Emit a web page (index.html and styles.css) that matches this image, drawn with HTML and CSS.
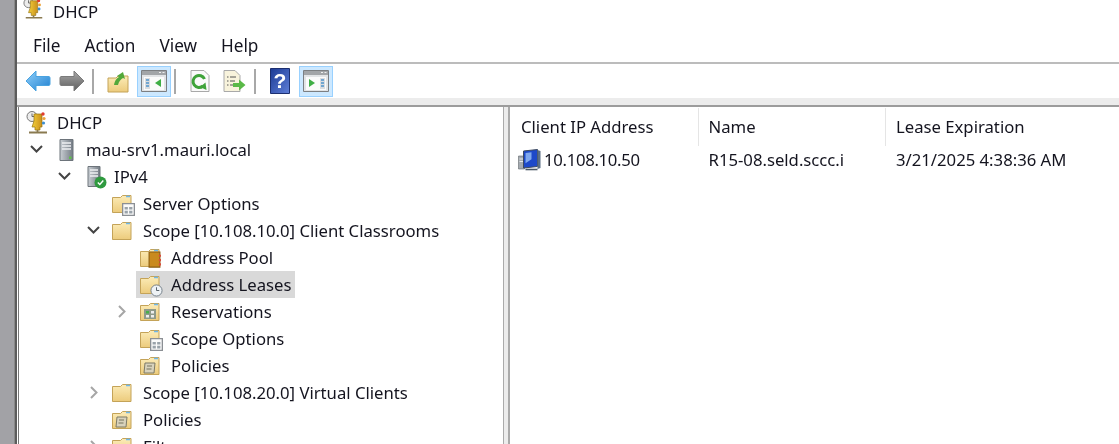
FILE: index.html
```html
<!DOCTYPE html>
<html lang="en">
<head>
  <meta charset="UTF-8">
  <title>DHCP</title>
  <link rel="stylesheet" href="styles.css">
</head>
<body>
  <svg class="defs" width="0" height="0">
    <defs>
      <linearGradient id="gFolder" x1="0" y1="0" x2="0" y2="1">
        <stop offset="0" stop-color="#fcecb8"/>
        <stop offset="1" stop-color="#eccb7c"/>
      </linearGradient>
      <linearGradient id="gBlue" x1="0" y1="0" x2="1" y2="1">
        <stop offset="0" stop-color="#8fd0fa"/>
        <stop offset="1" stop-color="#1f7fd0"/>
      </linearGradient>
      <linearGradient id="gGray" x1="0" y1="0" x2="0" y2="1">
        <stop offset="0" stop-color="#a8a8a8"/>
        <stop offset="1" stop-color="#5d5d5d"/>
      </linearGradient>
      <linearGradient id="gServer" x1="0" y1="0" x2="1" y2="0">
        <stop offset="0" stop-color="#c9ced3"/>
        <stop offset="1" stop-color="#737b84"/>
      </linearGradient>
      <linearGradient id="gHelp" x1="0" y1="0" x2="1" y2="1">
        <stop offset="0" stop-color="#1c3a94"/>
        <stop offset="1" stop-color="#5f7fd8"/>
      </linearGradient>
      <linearGradient id="gGold" x1="0" y1="0" x2="1" y2="0">
        <stop offset="0" stop-color="#f3cf3a"/>
        <stop offset="1" stop-color="#c98f1c"/>
      </linearGradient>
      <symbol id="folder" viewBox="0 0 22 22">
        <path d="M1.500 4.500h8l2-2h8.500v17h-18.500z" fill="url(#gFolder)" stroke="#c4a358"/>
        <path d="M15 3.500h4" stroke="#6fb7e8" stroke-width="1.500"/>
      </symbol>
      <symbol id="dhcp" viewBox="0 0 24 24">
        <circle cx="6" cy="5.500" r="5" fill="#ececec" stroke="#777"/>
        <path d="M6 2.500v3h3" fill="none" stroke="#666"/>
        <path d="M8 3h8v13h-2v3h-5v-3h-3l2-6z" fill="url(#gGold)" stroke="#96740f" stroke-width=".7"/>
        <circle cx="17" cy="3" r="1.700" fill="#e23c30"/>
        <circle cx="18" cy="7.500" r="1.600" fill="#eda33a"/>
        <circle cx="17.500" cy="12" r="1.600" fill="#3c8ed0"/>
        <path d="M11.500 19v2M3 21.500h18" stroke="#8a7a50" stroke-width="1.800"/>
      </symbol>
      <symbol id="server" viewBox="0 0 16 24">
        <path d="M1 1.500h13v21h-13z" fill="url(#gServer)" stroke="#6d747b"/>
        <path d="M3 5h9M3 8h9M3 11h9" stroke="#eef0f2" stroke-width="1.300"/>
        <rect x="10" y="18.500" width="2.500" height="2.500" fill="#5fc04a"/>
      </symbol>
      <symbol id="ipv4" viewBox="0 0 20 24">
        <path d="M1 1.500h12v20h-12z" fill="url(#gServer)" stroke="#6d747b"/>
        <path d="M3 5h8M3 8h8M3 11h8" stroke="#eef0f2" stroke-width="1.300"/>
        <circle cx="13.500" cy="17.500" r="6" fill="#2f9a3f"/>
        <path d="M10.800 17.500l2 2 3.500-4" fill="none" stroke="#fff" stroke-width="1.400"/>
      </symbol>
      <symbol id="grid" viewBox="0 0 10 10">
        <path d="M.5 .5h9v9h-9z" fill="#fafafa" stroke="#8b8f94"/>
        <path d="M2 3h2.500v2h-2.500zM5.500 3h2.500v2h-2.500zM2 6h2.500v2h-2.500zM5.500 6h2.500v2h-2.500z" fill="#9aa3aa"/>
      </symbol>
      <symbol id="doc" viewBox="0 0 22 24">
        <path d="M2 1.500h13l5 5v16h-18z" fill="#fafafa" stroke="#a9a9a9"/>
      </symbol>
      <symbol id="panel" viewBox="0 0 26 22">
        <path d="M.5 .5h25v21h-25z" fill="#e2e4e6" stroke="#7c7f82"/>
        <path d="M1 1h24v4h-24z" fill="#a2a5a8"/>
        <path d="M18 2.500h2M21.500 2.500h2" stroke="#eee"/>
        <path d="M3 7h20v13h-20z" fill="#fbfbfb"/>
      </symbol>
    </defs>
  </svg>

  <div class="app">
    <div class="strip"></div>
    <div class="window">

      <div class="title">
        <svg class="title-icon"><use href="#dhcp"/></svg>
        <span>DHCP</span>
      </div>

      <ul class="menu">
        <li>File</li>
        <li>Action</li>
        <li>View</li>
        <li>Help</li>
      </ul>

      <div class="toolbar">
        <span class="tool">
          <svg width="26" height="22" viewBox="0 0 26 22"><path d="M1 11l10-10v5.500h13a1.500 1.500 0 0 1 1 1.500v6a1.500 1.500 0 0 1-1 1.500h-13v5.500z" fill="url(#gBlue)" stroke="#4aa3e0"/></svg>
        </span>
        <span class="tool">
          <svg width="26" height="22" viewBox="0 0 26 22"><path d="M25 11l-10-10v5.500h-13a1.500 1.500 0 0 0-1 1.500v6a1.500 1.500 0 0 0 1 1.500h13v5.500z" fill="url(#gGray)" stroke="#7b7b7b"/></svg>
        </span>
        <span class="sep"></span>
        <span class="tool">
          <svg width="22" height="23" viewBox="0 0 22 23"><path d="M1 8h8l2-2h10v16h-20z" fill="url(#gFolder)" stroke="#c4a358"/><path d="M7 15c1-5 3-7 5-8l-2-1 6-4 2 7-2-1c-2 1-4 3-5 7z" fill="#52a83a"/></svg>
        </span>
        <span class="tool on">
          <svg width="26" height="22"><use href="#panel"/><path d="M4 8h5v11h-5z" fill="#d9dce0"/><path d="M5 10h3M5 13h3M5 16h3" stroke="#4f94cc" stroke-width="1.500"/><path d="M20 9v8l-6-4z" fill="#3fae45"/></svg>
        </span>
        <span class="sep"></span>
        <span class="tool">
          <svg width="22" height="24"><use href="#doc"/><path d="M15.500 10a6 6 0 1 0-1.500 7" fill="none" stroke="#3fa33a" stroke-width="3"/><path d="M11 18l6.500 3-1-7.500z" fill="#3fa33a"/></svg>
        </span>
        <span class="tool">
          <svg width="24" height="24" viewBox="0 0 24 24"><path d="M2 1.500h11l5 5v16h-16z" fill="#f8f3dc" stroke="#a9a9a9"/><path d="M5 8h1.500M8 8h6M5 12h1.500M8 12h5M5 16h1.500M8 16h3" stroke="#555"/><path d="M11 14h6v-3.500l6.500 5.500-6.500 5.500v-3.500h-6z" fill="#5ab947"/></svg>
        </span>
        <span class="sep"></span>
        <span class="tool">
          <svg width="20" height="26" viewBox="0 0 20 26"><path d="M.5 .5h19v25h-19z" fill="url(#gHelp)" stroke="#1c2f70"/><text class="help-mark" x="10" y="20" text-anchor="middle">?</text></svg>
        </span>
        <span class="tool on">
          <svg width="26" height="22"><use href="#panel"/><path d="M17 8h5v11h-5z" fill="#d9dce0"/><path d="M18 10h3M18 13h3M18 16h3" stroke="#4f94cc" stroke-width="1.500"/><path d="M6 9v8l6-4z" fill="#3fae45"/></svg>
        </span>
      </div>

      <div class="band"></div>

      <div class="panes">
        <ul class="tree">
          <li class="row root">
            <span class="node"><svg class="ico"><use href="#dhcp"/></svg>DHCP</span>
          </li>
          <li class="row l1">
            <svg class="twisty"><path d="M2 4l5.500 5.500 5.500-5.500" /></svg>
            <span class="node"><span class="ico-box"><svg class="ico-srv"><use href="#server"/></svg></span>mau-srv1.mauri.local</span>
          </li>
          <li class="row l2">
            <svg class="twisty"><path d="M2 4l5.500 5.500 5.500-5.500" /></svg>
            <span class="node"><span class="ico-box"><svg class="ico-ip"><use href="#ipv4"/></svg></span>IPv4</span>
          </li>
          <li class="row l3">
            <span class="twisty"></span>
            <span class="node"><span class="ico-box"><svg class="ico"><use href="#folder"/></svg><svg class="badge"><use href="#grid"/></svg></span>Server Options</span>
          </li>
          <li class="row l3">
            <svg class="twisty"><path d="M2 4l5.500 5.500 5.500-5.500" /></svg>
            <span class="node"><span class="ico-box"><svg class="ico"><use href="#folder"/></svg></span>Scope [10.108.10.0] Client Classrooms</span>
          </li>
          <li class="row l4">
            <span class="twisty"></span>
            <span class="node"><span class="ico-box"><svg class="ico"><use href="#folder"/></svg><svg class="pool" viewBox="0 0 12 15"><path d="M1 .5h10v14h-10z" fill="#c98a1e" stroke="#8a5c10"/><path d="M11 3v2M11 7v2M11 11v2" stroke="#d94a3a" stroke-width="2"/></svg></span>Address Pool</span>
          </li>
          <li class="row l4">
            <span class="twisty"></span>
            <span class="node selected"><span class="ico-box"><svg class="ico"><use href="#folder"/></svg><svg class="badge" viewBox="0 0 14 14"><circle cx="7" cy="7" r="6" fill="#eef2f5" stroke="#6f7b85"/><path d="M7 3.500v3.500h3" fill="none" stroke="#4d5760"/></svg></span>Address Leases</span>
          </li>
          <li class="row l4">
            <svg class="twisty gray"><path d="M5 2l5.500 5.500-5.500 5.500" /></svg>
            <span class="node"><span class="ico-box"><svg class="ico"><use href="#folder"/><path d="M5 8h12v10h-12z" fill="#8f9a8a"/><path d="M7 10h3v2.500h-3z" fill="#48b048"/><path d="M12 10h3v2.500h-3zM7 14h3v2.500h-3zM12 14h3v2.500h-3z" fill="#eee"/></svg></span>Reservations</span>
          </li>
          <li class="row l4">
            <span class="twisty"></span>
            <span class="node"><span class="ico-box"><svg class="ico"><use href="#folder"/></svg><svg class="badge"><use href="#grid"/></svg></span>Scope Options</span>
          </li>
          <li class="row l4">
            <span class="twisty"></span>
            <span class="node"><span class="ico-box"><svg class="ico"><use href="#folder"/><path d="M6 8h10l-1 10h-10z" fill="#d8d2bc" stroke="#7d7a66"/><path d="M8 11h5M7.500 14h5" stroke="#77745f"/></svg></span>Policies</span>
          </li>
          <li class="row l3">
            <svg class="twisty gray"><path d="M5 2l5.500 5.500-5.500 5.500" /></svg>
            <span class="node"><span class="ico-box"><svg class="ico"><use href="#folder"/></svg></span>Scope [10.108.20.0] Virtual Clients</span>
          </li>
          <li class="row l3">
            <span class="twisty"></span>
            <span class="node"><span class="ico-box"><svg class="ico"><use href="#folder"/><path d="M6 8h10l-1 10h-10z" fill="#d8d2bc" stroke="#7d7a66"/><path d="M8 11h5M7.500 14h5" stroke="#77745f"/></svg></span>Policies</span>
          </li>
          <li class="row l3">
            <svg class="twisty gray"><path d="M5 2l5.500 5.500-5.500 5.500" /></svg>
            <span class="node"><span class="ico-box"><svg class="ico"><use href="#folder"/><path d="M4 8h14v10h-14z" fill="#6b7278"/></svg></span>Filters</span>
          </li>
        </ul>

        <div class="splitter"></div>

        <div class="list">
          <div class="list-head">
            <span class="col">Client IP Address</span>
            <span class="col">Name</span>
            <span class="col">Lease Expiration</span>
          </div>
          <div class="list-row">
            <span class="col first">
              <svg class="pc" viewBox="0 0 24 22"><path d="M1 7h6v13h-6z" fill="#a4aab0" stroke="#5f666c" stroke-width=".6"/><path d="M2 10h4M2 12.500h4" stroke="#e8eaec"/><path d="M6 2l14-1.500v17l-14 1.500z" fill="#1d49c9" stroke="#3d4a5e"/><path d="M8 4l6-.7v7l-6 4z" fill="#7fa8ee"/><path d="M20 1l3 1v17l-3 1z" fill="#5a6f86"/><path d="M8 20.500h12" stroke="#4a5866" stroke-width="1.600"/></svg>
              <span class="ip">10.108.10.50</span>
            </span>
            <span class="col">R15-08.seld.sccc.i</span>
            <span class="col">3/21/2025 4:38:36 AM</span>
          </div>
        </div>
      </div>

    </div>
  </div>
</body>
</html>
```

FILE: styles.css
```css
* {
  margin: 0;
  padding: 0;
  box-sizing: border-box;
}

html, body {
  height: 100%;
  overflow: hidden;
  background: #fff;
}

ul {
  list-style: none;
}

.defs {
  position: absolute;
}

.app {
  display: flex;
  height: 444px;
  font-family: "Noto Sans", sans-serif;
  font-size: 16.7px;
  color: #14141f;
  filter: blur(0.35px);
}

.strip {
  width: 17px;
  flex: none;
  background: #a2a2a6;
  border-right: 2px solid #5c5c5c;
  box-shadow: inset -1px 0 0 #8a8a8a;
}

.window {
  flex: 1;
  min-width: 0;
  display: flex;
  flex-direction: column;
  background: #fff;
}

/* title + menu */
.title {
  height: 22px;
  display: flex;
  align-items: center;
  padding-left: 6px;
  gap: 8px;
  overflow: hidden;
}

.title-icon {
  width: 22px;
  height: 24px;
  margin-top: -4px;
}

.menu {
  height: 42px;
  display: flex;
  align-items: center;
  padding: 6px 0 0 16px;
  font-size: 17.200px;
  border-bottom: 2px solid #bcbcbc;
}

.menu li {
  margin-right: 24px;
}

/* toolbar */
.toolbar {
  height: 34px;
  display: flex;
  align-items: center;
  padding-left: 4px;
}

.tool {
  width: 34px;
  height: 31px;
  display: flex;
  align-items: center;
  justify-content: center;
}

.tool.on {
  margin-left: 2px;
  background: #cce8ff;
  border: 1px solid #99d1ff;
}

.sep {
  width: 2px;
  height: 25px;
  margin: 0 7px 0 3px;
  background: #a8a8a8;
}

.help-mark {
  font-family: "Liberation Sans", sans-serif;
  font-size: 21px;
  font-weight: bold;
  fill: #fff;
}

.band {
  height: 9px;
  background: #ececec;
  border-bottom: 2px solid #9c9c9c;
}

/* panes */
.panes {
  flex: 1;
  min-height: 0;
  display: flex;
}

.tree {
  width: 485px;
  flex: none;
  margin-left: 1px;
  padding-top: 2px;
  border-left: 1px solid #777;
  overflow: hidden;
}

.splitter {
  width: 7px;
  flex: none;
  background: #ececec;
  border-left: 1px solid #aaa;
  border-right: 2px solid #aaa;
}

.row {
  height: 27px;
  display: flex;
  align-items: center;
  white-space: nowrap;
}

.root { padding-left: 7px; }
.l1 { padding-left: 10px; }
.l2 { padding-left: 38px; }
.l3 { padding-left: 67px; }
.l4 { padding-left: 95px; }

.twisty {
  width: 25px;
  height: 15px;
  flex: none;
  display: block;
  fill: none;
  stroke: #444;
  stroke-width: 2;
}

.twisty.gray {
  stroke: #a6a6a6;
}

.node {
  height: 27px;
  display: flex;
  align-items: center;
  margin-left: -3px;
  padding: 0 4px 0 3px;
}

.root .node {
  margin-left: 0;
  padding: 0;
}

.selected {
  background: #d9d9d9;
}

.root .ico {
  width: 24px;
  height: 24px;
  margin-right: 7px;
}

.ico-box {
  width: 32px;
  height: 24px;
  flex: none;
  position: relative;
  display: flex;
  align-items: center;
}

.ico {
  width: 22px;
  height: 22px;
}

.ico-srv {
  width: 16px;
  height: 24px;
  margin-left: 5px;
}

.ico-ip {
  width: 20px;
  height: 24px;
  margin-left: 5px;
}

/* small overlays on the folder icons */
.badge {
  position: absolute;
  left: 11px;
  top: 11px;
  width: 13px;
  height: 13px;
}

.pool {
  position: absolute;
  left: 9px;
  top: 5px;
  width: 13px;
  height: 17px;
}

/* list */
.list {
  flex: 1;
  min-width: 0;
  padding-left: 1px;
}

.list-head {
  height: 39px;
  display: flex;
  align-items: flex-end;
}

.list-head .col {
  height: 38px;
  line-height: 38px;
  border-right: 1px solid #e5e5e5;
}

.list-head .col:last-child {
  border-right: 0;
}

.list-row {
  height: 27px;
  display: flex;
  align-items: center;
}

.col {
  width: 187.500px;
  flex: none;
  padding-left: 10px;
  white-space: nowrap;
}

.first {
  display: flex;
  align-items: center;
  padding-left: 6px;
  gap: 2px;
}

.ip {
  letter-spacing: -0.3px;
}

.pc {
  width: 25px;
  height: 22px;
}
```
